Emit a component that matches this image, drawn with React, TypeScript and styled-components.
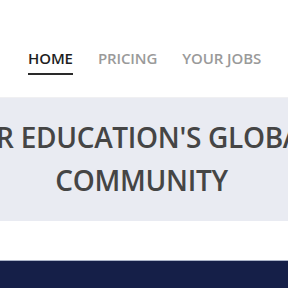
import React from 'react'
import styled, { createGlobalStyle } from 'styled-components'

const GlobalStyle = createGlobalStyle`
	html, body {
		margin: 0;
		padding: 0;
		background: #ffffff;
		font-family: 'Open Sans', 'Liberation Sans', sans-serif;
		overflow: hidden;
	}
`

const navItems = ['HOME', 'PRICING', 'YOUR JOBS']

export default function App() {
	return (
		<>
			<GlobalStyle />
			<Page>
				<TopBar>
					<Nav>
						{navItems.map((item, i) => (
							<NavLink key={item} active={i === 0}>
								{item}
							</NavLink>
						))}
					</Nav>
				</TopBar>
				<Banner>
					<BannerLine shift={56}>HIGHER EDUCATION'S GLOBAL</BannerLine>
					<BannerLine>COMMUNITY</BannerLine>
				</Banner>
				<Spacer />
				<Footer />
			</Page>
		</>
	)
}

const Page = styled.div`
	width: 288px;
	height: 288px;
	display: flex;
	flex-direction: column;
	overflow: hidden;
`

const TopBar = styled.header`
	height: 97px;
	padding-left: 28px;
	box-sizing: border-box;
	display: flex;
	align-items: flex-start;
	padding-top: 48px;
`

const Nav = styled.nav`
	display: flex;
	gap: 25px;
`

const NavLink = styled.a<{ active?: boolean }>`
	font-size: 15px;
	font-weight: 600;
	letter-spacing: -0.1px;
	color: ${({ active }) => (active ? '#1e1e1e' : '#9a9a9a')};
	padding-bottom: 5px;
	border-bottom: 2px solid ${({ active }) => (active ? '#2a2a2a' : 'transparent')};
	line-height: 20px;
`

const Banner = styled.section`
	height: 124px;
	background-color: #e9ebf2;
	border-top: 1px solid #f0f0f2;
	box-sizing: border-box;
	display: flex;
	flex-direction: column;
	align-items: center;
	justify-content: center;
	padding-bottom: 2px;
	padding-right: 5px;
`

const BannerLine = styled.h1<{ shift?: number }>`
	margin: 0 ${({ shift }) => shift ?? 0}px 0 0;
	white-space: nowrap;
	font-size: 28px;
	font-weight: 600;
	line-height: 43px;
	letter-spacing: -0.3px;
	color: #454545;
`

const Spacer = styled.div`
	height: 39px;
	background: #ffffff;
`

const Footer = styled.footer`
	flex: 1;
	background-color: #151f48;
	border-top: 1px solid #aab3c8;
`
